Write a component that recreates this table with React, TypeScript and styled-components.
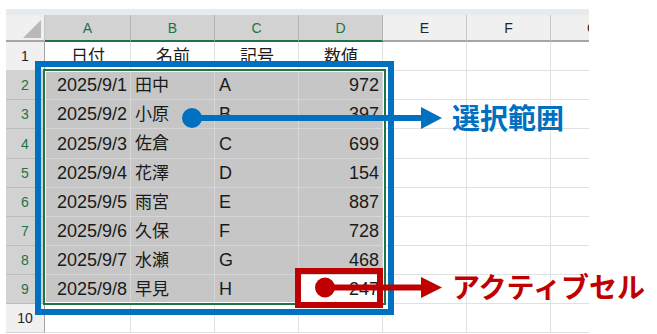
import React from "react";
import styled, { createGlobalStyle } from "styled-components";

const GREEN = "#217346";
const BLUE = "#0070c0";
const RED = "#c00000";

const GlobalStyle = createGlobalStyle`
  html, body { margin: 0; padding: 0; background: #fff; }
  body { font-family: "Liberation Sans", "Noto Sans CJK JP", sans-serif; }
`;

const rows = [
  ["2025/9/1", "田中", "A", 972],
  ["2025/9/2", "小原", "B", 397],
  ["2025/9/3", "佐倉", "C", 699],
  ["2025/9/4", "花澤", "D", 154],
  ["2025/9/5", "雨宮", "E", 887],
  ["2025/9/6", "久保", "F", 728],
  ["2025/9/7", "水瀬", "G", 468],
  ["2025/9/8", "早見", "H", 247],
];
const titles = ["日付", "名前", "記号", "数値"];
const cols = ["A", "B", "C", "D", "E", "F", "G"];

const Page = styled.div`
  position: relative;
  width: 657px;
  height: 334px;
  overflow: hidden;
  padding: 9px 0 0 6px;
  box-sizing: border-box;
  background: #fff;
`;

const Sheet = styled.div`
  width: 583px;
  height: 325px;
  overflow: hidden;
  display: flex;
  flex-direction: column;
`;

const TopStrip = styled.div`
  height: 6px;
  flex: none;
  background: #e8ebee;
`;

const Grid = styled.div`
  display: grid;
  grid-template-columns: 39px 86px repeat(6, 84px);
  grid-template-rows: 27px 29px 29px 29px 30px repeat(6, 29px);
`;

const Corner = styled.div`
  display: flex;
  align-items: flex-end;
  justify-content: flex-end;
  padding: 0 3px 2px 0;
  background: #f0f0f0;
  border-right: 1px solid #c6c6c6;
  border-bottom: 2px solid #a6a6a6;
  box-sizing: border-box;
`;

const Triangle = styled.div`
  width: 18px;
  height: 18px;
  background: #b9b9b9;
  clip-path: polygon(100% 0, 100% 100%, 0 100%);
`;

const ColHead = styled.div<{ $on?: boolean }>`
  display: flex;
  align-items: center;
  justify-content: center;
  font-size: 14px;
  color: ${(p) => (p.$on ? GREEN : "#262626")};
  background: ${(p) => (p.$on ? "#d2d2d2" : "#f0f0f0")};
  border-right: 1px solid ${(p) => (p.$on ? "#b4b4b4" : "#c6c6c6")};
  border-bottom: 2px solid ${(p) => (p.$on ? GREEN : "#a6a6a6")};
  box-sizing: border-box;
  white-space: nowrap;
`;

const RowHead = styled.div<{ $on?: boolean }>`
  display: flex;
  align-items: center;
  justify-content: center;
  font-size: 14px;
  color: ${(p) => (p.$on ? GREEN : "#262626")};
  background: ${(p) => (p.$on ? "#d2d2d2" : "#f0f0f0")};
  border-bottom: 1px solid ${(p) => (p.$on ? "#bcbcbc" : "#d4d4d4")};
  border-right: 1px solid ${(p) => (p.$on ? GREEN : "#a6a6a6")};
  box-sizing: border-box;
`;

const Cell = styled.div<{ $on?: boolean; $align?: string; $jp?: boolean }>`
  display: flex;
  align-items: center;
  justify-content: ${(p) => p.$align || "flex-start"};
  padding: 0 3px 0 4px;
  font-size: ${(p) => (p.$jp ? "17px" : "18px")};
  line-height: 1;
  color: #1a1a1a;
  background: ${(p) => (p.$on ? "#c6c6c6" : "#fff")};
  border-right: 1px solid ${(p) => (p.$on ? "#d6d6d6" : "#e1e1e1")};
  border-bottom: 1px solid ${(p) => (p.$on ? "#d6d6d6" : "#e1e1e1")};
  box-sizing: border-box;
  white-space: nowrap;
  overflow: hidden;
`;

const SelectionFrame = styled.div`
  position: absolute;
  left: 43px;
  top: 69px;
  width: 343px;
  height: 236px;
  border: 2px solid ${GREEN};
  box-shadow: inset 0 0 0 1px #fff;
  box-sizing: border-box;
`;

const Frame = styled.div<{ $color: string }>`
  position: absolute;
  border: 6px solid ${(p) => p.$color};
  box-sizing: border-box;
`;

const Callouts = styled.svg`
  position: absolute;
  left: 0;
  top: 0;
  pointer-events: none;
`;

const Label = styled.div<{ $color: string }>`
  position: absolute;
  left: 452px;
  font-family: "Noto Sans CJK JP", sans-serif;
  font-weight: 700;
  font-size: 28px;
  line-height: 28px;
  white-space: nowrap;
  color: ${(p) => p.$color};
`;

export default function App() {
  return (
    <>
      <GlobalStyle />
      <Page>
        <Sheet>
          <TopStrip />
          <Grid>
            <Corner>
              <Triangle />
            </Corner>
            {cols.map((c, i) => (
              <ColHead key={c} $on={i < 4}>
                {c}
              </ColHead>
            ))}

            <RowHead>1</RowHead>
            {titles.map((t) => (
              <Cell key={t} $align="center" $jp>
                {t}
              </Cell>
            ))}
            <Cell />
            <Cell />
            <Cell />

            {rows.map((r, i) => {
              const last = i === rows.length - 1;
              return (
                <React.Fragment key={i}>
                  <RowHead $on>{i + 2}</RowHead>
                  <Cell $on $align="flex-end">{r[0]}</Cell>
                  <Cell $on $jp>{r[1]}</Cell>
                  <Cell $on>{r[2]}</Cell>
                  <Cell $on={!last} $align="flex-end">{r[3]}</Cell>
                  <Cell />
                  <Cell />
                  <Cell />
                </React.Fragment>
              );
            })}

            <RowHead>10</RowHead>
            {cols.map((c) => (
              <Cell key={c} />
            ))}
          </Grid>
        </Sheet>

        <SelectionFrame />
        <Frame $color={BLUE} style={{ left: 35, top: 61, width: 359, height: 254 }} />
        <Frame $color={RED} style={{ left: 295, top: 268, width: 88, height: 40 }} />

        <Callouts width="657" height="334" viewBox="0 0 657 334">
          <circle cx="192" cy="118" r="10" fill={BLUE} />
          <rect x="192" y="115" width="231" height="6" fill={BLUE} />
          <polygon points="421,107 442,118 421,129" fill={BLUE} />

          <circle cx="325" cy="287.5" r="10" fill={RED} />
          <rect x="325" y="284.5" width="98" height="6" fill={RED} />
          <polygon points="421,277 442,287.5 421,298" fill={RED} />
        </Callouts>

        <Label $color={BLUE} style={{ top: 103 }}>選択範囲</Label>
        <Label $color={RED} style={{ top: 272 }}>アクティブセル</Label>
      </Page>
    </>
  );
}
